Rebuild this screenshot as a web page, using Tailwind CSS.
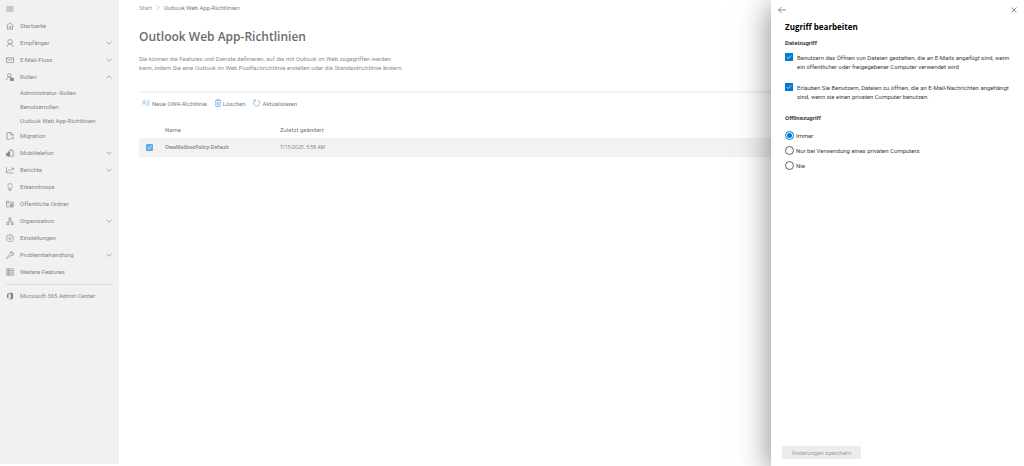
<!DOCTYPE html>
<html lang="de">
<head>
  <meta charset="UTF-8" />
  <title>Outlook Web App-Richtlinien - Exchange Admin Center</title>
  <meta name="viewport" content="width=device-width, initial-scale=1" />
  <script src="https://cdn.jsdelivr.net/npm/@tailwindcss/browser@4"></script>
</head>
<body class="bg-white font-['Roboto','Open_Sans',sans-serif] text-[6px] leading-[9px]">
  <div class="flex min-h-screen overflow-hidden">
    <!-- Sidebar -->
    <nav class="mb-[2px] w-[119px] shrink-0 bg-[#f1f1f1] text-[#858585] whitespace-nowrap">
      <button class="flex h-[17px] items-center pl-[6px]" aria-label="Navigation">
        <svg class="w-[8px] h-[8px]" viewBox="0 0 16 16" fill="none" stroke="currentColor" stroke-width="1.6"><path d="M1 4h14M1 8h14M1 12h14" /></svg>
      </button>
      <a href="#" class="flex h-[17px] items-center gap-[6px] px-[6px]">
        <svg class="w-[8px] h-[8px]" viewBox="0 0 16 16" fill="none" stroke="currentColor" stroke-width="1.3"><path d="M1 8l7-6.500L15 8M3 6.500V14.500h3.500V10a1.500 1.500 0 0 1 3 0v4.500H13V6.500" /></svg>
        <span>Startseite</span>
      </a>
      <button class="flex h-[17px] w-full items-center gap-[6px] pr-[7px] pl-[6px]">
        <svg class="w-[8px] h-[8px]" viewBox="0 0 16 16" fill="none" stroke="currentColor" stroke-width="1.4"><circle cx="8" cy="5.500" r="4.500" /><path d="M2 15.500c0-3.500 2.500-5.500 6-5.500s6 2 6 5.500" /></svg>
        <span>Empfänger</span>
        <svg class="ml-auto w-[6px] h-[6px]" viewBox="0 0 12 12" fill="none" stroke="currentColor" stroke-width="1.4"><path d="M1 3.500l5 5 5-5" /></svg>
      </button>
      <button class="flex h-[17px] w-full items-center gap-[6px] pr-[7px] pl-[6px]">
        <svg class="w-[8px] h-[8px]" viewBox="0 0 16 16" fill="none" stroke="currentColor" stroke-width="1.3"><path d="M1 3.500h14v9.500H1zM1 4.500l7 4.500 7-4.500" /></svg>
        <span>E-Mail-Fluss</span>
        <svg class="ml-auto w-[6px] h-[6px]" viewBox="0 0 12 12" fill="none" stroke="currentColor" stroke-width="1.4"><path d="M1 3.500l5 5 5-5" /></svg>
      </button>
      <button class="flex h-[17px] w-full items-center gap-[6px] pr-[7px] pl-[6px]" aria-expanded="true">
        <svg class="w-[8px] h-[8px]" viewBox="0 0 16 16" fill="none" stroke="currentColor" stroke-width="1.4"><circle cx="6.500" cy="4.500" r="3.500" /><path d="M1 14.500c0-4 2-6.500 5.500-6.500 1.500 0 2.500.5 3.500 1.500" /><path d="M8.500 11h6.500v4.500H8.500z" fill="currentColor" /><path d="M10 11V9.500h3.500V11" /></svg>
        <span>Rollen</span>
        <svg class="ml-auto w-[6px] h-[6px]" viewBox="0 0 12 12" fill="none" stroke="currentColor" stroke-width="1.4"><path d="M1 8.500l5-5 5 5" /></svg>
      </button>
      <div class="pl-[20px]">
        <a href="#" class="flex h-[14px] items-center">Administrator- Rollen</a>
        <a href="#" class="flex h-[14px] items-center">Benutzerrollen</a>
        <a href="#" class="flex h-[14px] items-center">Outlook Web App-Richtlinien</a>
      </div>
      <a href="#" class="flex h-[17px] items-center gap-[6px] px-[6px]">
        <svg class="w-[8px] h-[8px]" viewBox="0 0 16 16" fill="none" stroke="currentColor" stroke-width="1.4"><path d="M8 15H2V1h8l4 4v4M9.500 1v4.500H14M9 12.500h6M13 10.500l2 2-2 2" /></svg>
        <span>Migration</span>
      </a>
      <button class="flex h-[17px] w-full items-center gap-[6px] pr-[7px] pl-[6px]">
        <svg class="w-[8px] h-[8px]" viewBox="0 0 16 16" fill="none" stroke="currentColor" stroke-width="1.4"><path d="M7.500 4V1.500H11v2h3.500v11H9" /><path d="M1 8.500h2V14H1zM4 6.500L7.500 5v9.500H4z" fill="currentColor" /></svg>
        <span>Mobiltelefon</span>
        <svg class="ml-auto w-[6px] h-[6px]" viewBox="0 0 12 12" fill="none" stroke="currentColor" stroke-width="1.4"><path d="M1 3.500l5 5 5-5" /></svg>
      </button>
      <button class="flex h-[17px] w-full items-center gap-[6px] pr-[7px] pl-[6px]">
        <svg class="w-[8px] h-[8px]" viewBox="0 0 16 16" fill="none" stroke="currentColor" stroke-width="1.3"><path d="M1 2v12h14M3 11l3.500-4 3 2.500L15 4M11 4h4v4" /></svg>
        <span>Berichte</span>
        <svg class="ml-auto w-[6px] h-[6px]" viewBox="0 0 12 12" fill="none" stroke="currentColor" stroke-width="1.4"><path d="M1 3.500l5 5 5-5" /></svg>
      </button>
      <a href="#" class="flex h-[17px] items-center gap-[6px] px-[6px]">
        <svg class="w-[8px] h-[8px]" viewBox="0 0 16 16" fill="none" stroke="currentColor" stroke-width="1.2"><path d="M6 11.500c0-2.500-2.500-3-2.500-6a4.500 4.500 0 0 1 9 0c0 3-2.500 3.500-2.500 6zM6 11.500v3.500h4v-3.500" /></svg>
        <span>Erkenntnisse</span>
      </a>
      <a href="#" class="flex h-[17px] items-center gap-[6px] px-[6px]">
        <svg class="w-[8px] h-[8px]" viewBox="0 0 16 16" fill="none" stroke="currentColor" stroke-width="1.3"><path d="M7 13.500H1v-11h5l1.500 2H15V7M1 6h6" /><circle cx="11.500" cy="11" r="3.500" /><path d="M8 11h7M11.500 7.500v7" /></svg>
        <span>Öffentliche Ordner</span>
      </a>
      <button class="flex h-[17px] w-full items-center gap-[6px] pr-[7px] pl-[6px]">
        <svg class="w-[8px] h-[8px]" viewBox="0 0 16 16" fill="none" stroke="currentColor" stroke-width="1.3"><path d="M6 1.500h4v4H6zM1.500 11h4v4h-4zM10.500 11h4v4h-4zM8 5.500V8M3.500 11L5 8h6l1.500 3" /></svg>
        <span>Organisation</span>
        <svg class="ml-auto w-[6px] h-[6px]" viewBox="0 0 12 12" fill="none" stroke="currentColor" stroke-width="1.4"><path d="M1 3.500l5 5 5-5" /></svg>
      </button>
      <a href="#" class="flex h-[17px] items-center gap-[6px] px-[6px]">
        <svg class="w-[8px] h-[8px]" viewBox="0 0 16 16" fill="none" stroke="currentColor" stroke-width="1.2"><path d="M6.500 1h3l.7 2 2-.7 2 2-.7 2 2 .7v3l-2 .7.700 2-2 2-2-.7-.7 2h-3l-.7-2-2 .7-2-2 .7-2-2-.7v-3l2-.7-.7-2 2-2 2 .7z" /><circle cx="8" cy="8.500" r="2.500" /></svg>
        <span>Einstellungen</span>
      </a>
      <button class="flex h-[17px] w-full items-center gap-[6px] pr-[7px] pl-[6px]">
        <svg class="w-[8px] h-[8px]" viewBox="0 0 16 16" fill="none" stroke="currentColor" stroke-width="1.3"><path d="M13 1.500a4.200 4.200 0 0 0-5.500 5.500L1.500 13a1.500 1.500 0 0 0 2 2L9.500 9A4.200 4.200 0 0 0 15 3.500L12.500 6l-2-2z" /></svg>
        <span>Problembehandlung</span>
        <svg class="ml-auto w-[6px] h-[6px]" viewBox="0 0 12 12" fill="none" stroke="currentColor" stroke-width="1.4"><path d="M1 3.500l5 5 5-5" /></svg>
      </button>
      <a href="#" class="flex h-[17px] items-center gap-[6px] px-[6px]">
        <svg class="w-[8px] h-[8px]" viewBox="0 0 16 16" fill="none" stroke="currentColor" stroke-width="1.2"><path d="M1.500 1.500h13v13h-13zM5.500 1.500v13M1.500 5h13M1.500 8.200h13M1.500 11.500h13" /></svg>
        <span>Weitere Features</span>
      </a>
      <hr class="mx-[6px] mt-[4px] border-[#dedede]" />
      <a href="#" class="mt-[2px] flex h-[17px] items-center gap-[6px] px-[6px]">
        <svg class="w-[8px] h-[8px]" viewBox="0 0 16 16" fill="currentColor"><path d="M2 4l7.500-3L14 2.300v11.400L9.500 15 2 12.300l7.500 1V3.300L5 4.500v6.300L2 12z" /></svg>
        <span>Microsoft 365 Admin Center</span>
      </a>
    </nav>

    <!-- Policy list -->
    <main class="min-w-0 flex-1 pl-[20px] text-[#7c7c7c]">
      <div class="flex h-[15px] items-center gap-[4px]">
        <a href="#" class="text-[#9a9a9a]">Start</a>
        <svg class="w-[4px] h-[5px]" viewBox="0 0 8 10" fill="none" stroke="#a0a0a0" stroke-width="1.3"><path d="M2 1l4 4-4 4" /></svg>
        <span>Outlook Web App-Richtlinien</span>
      </div>
      <h1 class="mt-[14px] font-['Open_Sans',sans-serif] text-[12px] leading-[16px] font-semibold text-[#6c6c6c]">Outlook Web App-Richtlinien</h1>
      <p class="mt-[9px] text-[#8c8c8c] whitespace-nowrap">Sie können die Features und Dienste definieren, auf die mit Outlook im Web zugegriffen werden<br />kann, indem Sie eine Outlook im Web Postfachrichtlinie erstellen oder die Standardrichtlinie ändern.</p>

      <div class="mt-[19px] flex h-[22px] items-center gap-[8px] border-t-2 border-[#f3f3f3] pl-[3px]">
        <button class="flex items-center gap-[2px]">
          <svg class="w-[8px] h-[8px]" viewBox="0 0 16 16" fill="none" stroke="#76b4e6" stroke-width="1.3"><circle cx="4" cy="5.500" r="2.200" /><path d="M.5 12.500c0-3 1.300-4.500 3.500-4.500s3.500 1.500 3.500 4.500M9 4h7M9 8h7M9 12h7" /></svg>
          <span>Neue OWA-Richtlinie</span>
        </button>
        <button class="flex items-center gap-[2px]">
          <svg class="w-[6px] h-[8px]" viewBox="0 0 12 16" fill="none" stroke="#5fabe8" stroke-width="1.4"><path d="M0 3h12M4 3V1h4v2M1.500 3v12h9V3M4.500 6v7M7.500 6v7" /></svg>
          <span>Löschen</span>
        </button>
        <button class="flex items-center gap-[2px]">
          <svg class="w-[7px] h-[8px]" viewBox="0 0 14 16" fill="none" stroke="#5fabe8" stroke-width="1.4"><path d="M9.500 2.300a6.200 6.200 0 1 1-5.500.4M1 2h3.500v3.500" /></svg>
          <span>Aktualisieren</span>
        </button>
      </div>

      <table class="mt-[7px] w-full table-fixed text-left">
        <thead>
          <tr class="h-[18px] align-middle">
            <th class="w-[26px]"></th>
            <th class="w-[115px] font-normal">Name</th>
            <th class="font-normal">Zuletzt geändert</th>
          </tr>
        </thead>
        <tbody>
          <tr class="h-[19px] bg-[#f3f2f1] font-['Open_Sans',sans-serif] text-[5px]">
            <td class="pl-[7px]">
              <label class="relative block w-[7px] h-[7px]">
                <input type="checkbox" checked aria-label="OwaMailboxPolicy-Default auswählen" class="block size-[7px] appearance-none rounded-[1px] bg-[#5fabe8]" />
                <svg class="pointer-events-none absolute inset-0 size-[7px]" viewBox="0 0 14 14" fill="none" stroke="white" stroke-width="1.4"><path d="M3 7l3 3 5-6" /></svg>
              </label>
            </td>
            <td class="font-semibold">OwaMailboxPolicy-Default</td>
            <td>7/15/2025, 5:58 AM</td>
          </tr>
        </tbody>
      </table>
    </main>

    <!-- Access panel -->
    <aside class="relative flex w-[253px] shrink-0 flex-col bg-white px-[14px] text-[#404040] shadow-[0_6px_30px_rgba(0,0,0,0.5)]">
      <div class="-mx-[7px] flex h-[19px] items-center justify-between">
        <button aria-label="Zurück"><svg class="w-[8px] h-[8px]" viewBox="0 0 16 16" fill="none" stroke="#555" stroke-width="1.3"><path d="M16 8H1M7 2L1 8l6 6" /></svg></button>
        <button aria-label="Schließen"><svg class="w-[6px] h-[6px]" viewBox="0 0 12 12" fill="none" stroke="#555" stroke-width="1.3"><path d="M1 1l10 10M11 1L1 11" /></svg></button>
      </div>
      <h2 class="mt-[3px] font-['Open_Sans',sans-serif] text-[8px] leading-[10px] font-bold text-black">Zugriff bearbeiten</h2>
      <h3 class="mt-[6px] font-bold">Dateizugriff</h3>
      <label class="mt-[6px] flex gap-[4px]">
        <span class="relative size-[8px] shrink-0">
          <input type="checkbox" checked class="block size-[8px] appearance-none bg-[#0078d4]" />
          <svg class="pointer-events-none absolute inset-0 size-[8px]" viewBox="0 0 16 16" fill="none" stroke="white" stroke-width="1.4"><path d="M3.500 8l3 3 6-6" /></svg>
        </span>
        <span>Benutzern das Öffnen von Dateien gestatten, die an E-Mails angefügt sind, wenn<br />ein öffentlicher oder freigegebener Computer verwendet wird</span>
      </label>
      <label class="mt-[12px] flex gap-[4px]">
        <span class="relative size-[8px] shrink-0">
          <input type="checkbox" checked class="block size-[8px] appearance-none bg-[#0078d4]" />
          <svg class="pointer-events-none absolute inset-0 size-[8px]" viewBox="0 0 16 16" fill="none" stroke="white" stroke-width="1.4"><path d="M3.500 8l3 3 6-6" /></svg>
        </span>
        <span>Erlauben Sie Benutzern, Dateien zu öffnen, die an E-Mail-Nachrichten angehängt<br />sind, wenn sie einen privaten Computer benutzen.</span>
      </label>
      <fieldset class="mt-[12px]">
        <legend class="font-bold">Offlinezugriff</legend>
        <label class="mt-[6px] flex h-[15px] items-center gap-[2px]">
          <input type="radio" name="offline" checked class="size-[9px] appearance-none rounded-full border border-[#0078d4] bg-[#0078d4] bg-clip-content p-px" />Immer
        </label>
        <label class="flex h-[15px] items-center gap-[2px]">
          <input type="radio" name="offline" class="size-[9px] appearance-none rounded-full border border-[#606060]" />Nur bei Verwendung eines privaten Computers
        </label>
        <label class="flex h-[15px] items-center gap-[2px]">
          <input type="radio" name="offline" class="size-[9px] appearance-none rounded-full border border-[#606060]" />Nie
        </label>
      </fieldset>
      <button disabled class="-ml-[3px] mt-auto mb-[7px] h-[13px] w-[79px] bg-[#ececec] text-[#a0a0a0]">Änderungen speichern</button>
    </aside>
  </div>
</body>
</html>
